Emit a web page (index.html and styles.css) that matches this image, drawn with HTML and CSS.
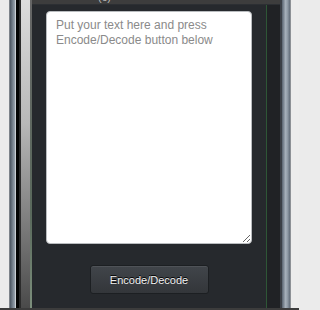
FILE: index.html
```html
<!DOCTYPE html>
<html>
<head>
<meta charset="utf-8">
<link rel="stylesheet" href="styles.css">
</head>
<body>
<div class="frame">
  <div class="side left">
    <div class="s light9"></div>
    <div class="s grey1"></div>
    <div class="s metal5"></div>
    <div class="s pale1"></div>
    <div class="s black3"></div>
    <div class="s dark2"></div>
    <div class="s fade9"></div>
    <div class="s line2"></div>
  </div>
  <div class="middle">
    <div class="header"><span class="title">(c)</span></div>
    <div class="body">
      <div class="panel">
        <textarea class="input" placeholder="Put your text here and press Encode/Decode button below"></textarea>
        <button class="btn">Encode/Decode</button>
      </div>
      <div class="s green1"></div>
      <div class="s shade13"></div>
    </div>
  </div>
  <div class="side right">
    <div class="s edge2"></div>
    <div class="s metal8"></div>
    <div class="s grey1b"></div>
    <div class="s light8"></div>
  </div>
</div>
<div class="footer"></div>
</body>
</html>
```
FILE: styles.css
```css
html, body {
  margin: 0;
  padding: 0;
  width: 299px;
  height: 310px;
  overflow: hidden;
  background: #ebebeb;
  font-family: "Liberation Sans", Arial, sans-serif;
}
.frame {
  display: flex;
  height: 308px;
}
.side {
  display: flex;
  height: 100%;
}
.s {
  height: 100%;
  flex: none;
}
.light9 { width: 9px; background: #ebebeb; }
.grey1 { width: 1px; background: #7d838a; }
.metal5 { width: 5px; background: linear-gradient(to right, #4b5561, #7b8692 60%, #9aa4ae); }
.pale1 { width: 1px; background: #c9ced3; }
.black3 { width: 3px; background: #050505; }
.dark2 { width: 2px; background: #2b2b2b; }
.fade9 { width: 9px; background: linear-gradient(to bottom, #dcdcdc, #b8b8b8 40%, #4a4a4a); }
.line2 { width: 2px; background: linear-gradient(to bottom, #666, #5a6a5c 70%, #7c8f7c); }

.middle {
  display: flex;
  flex-direction: column;
  width: 248px;
  flex: none;
}
.header {
  height: 4px;
  background: #3d3d3d;
  overflow: hidden;
  padding-left: 66px;
  border-bottom: 1px solid #2c2f33;
}
.title {
  display: block;
  color: #bbb;
  font-size: 11px;
  line-height: 11px;
  margin-top: -8px;
}
.body {
  display: flex;
  flex: 1;
}
.panel {
  width: 234px;
  flex: none;
  background: #26292d;
  display: flex;
  flex-direction: column;
  align-items: center;
}
.input {
  box-sizing: border-box;
  width: 206px;
  height: 233px;
  margin-top: 6px;
  padding: 6px 9px;
  border: 1px solid #b9bcbf;
  border-radius: 4px;
  background: #fff;
  font-family: "Liberation Sans", Arial, sans-serif;
  font-size: 12px;
  line-height: 15px;
  color: #333;
  outline: none;
}
.input::placeholder {
  color: #8a8a8a;
}
.btn {
  margin-top: 21px;
  width: 119px;
  height: 29px;
  border: 1px solid #1c1f22;
  border-radius: 3px;
  background: linear-gradient(to bottom, #41454a, #33363a);
  box-shadow: inset 0 1px 0 rgba(255,255,255,0.08);
  color: #f2f2f2;
  font-family: "Liberation Sans", Arial, sans-serif;
  font-size: 11px;
  text-shadow: 0 -1px 0 #000;
  padding: 0;
}
.green1 { width: 1px; background: #2e5636; }
.shade13 { width: 13px; background: #202225; }

.edge2 { width: 2px; background: #3b4046; }
.metal8 { width: 8px; background: linear-gradient(to right, #58636f, #a7b1bb 45%, #8e99a4 70%, #616c78); }
.grey1b { width: 1px; background: #8d9196; }
.light8 { width: 8px; background: #ececec; }

.footer {
  height: 2px;
  background: #3c3c3c;
}
```
